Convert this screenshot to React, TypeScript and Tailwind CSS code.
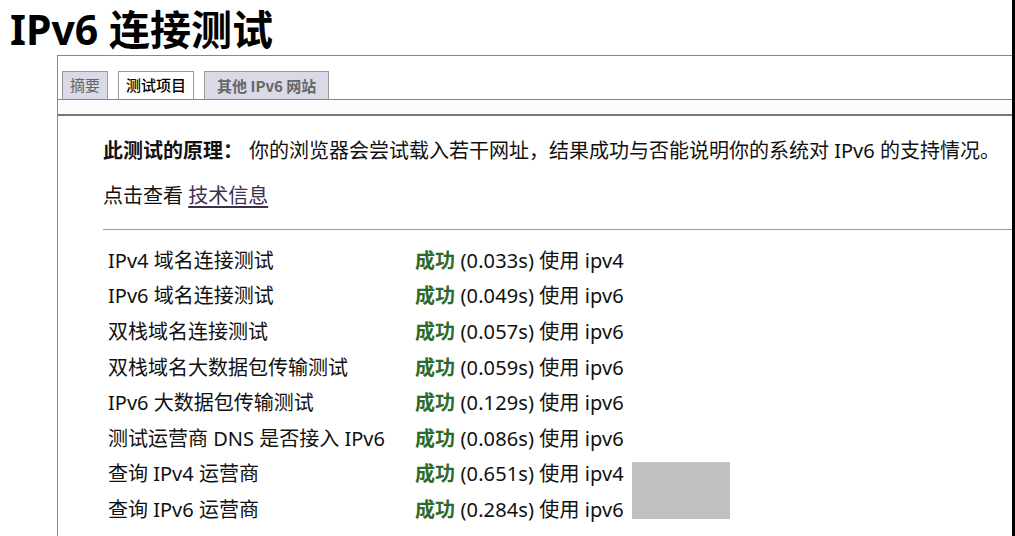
const rows = [
  { name: "IPv4 域名连接测试", time: "0.033s", via: "ipv4" },
  { name: "IPv6 域名连接测试", time: "0.049s", via: "ipv6" },
  { name: "双栈域名连接测试", time: "0.057s", via: "ipv6" },
  { name: "双栈域名大数据包传输测试", time: "0.059s", via: "ipv6" },
  { name: "IPv6 大数据包传输测试", time: "0.129s", via: "ipv6" },
  { name: "测试运营商 DNS 是否接入 IPv6", time: "0.086s", via: "ipv6" },
  { name: "查询 IPv4 运营商", time: "0.651s", via: "ipv4" },
  { name: "查询 IPv6 运营商", time: "0.284s", via: "ipv6" },
];

export default function App() {
  return (
    <div className="w-[1015px] h-[536px] overflow-hidden bg-white border-r-[3px] border-black text-[#111] font-['Noto_Sans','Noto_Sans_CJK_SC',sans-serif]">
      {/* Title */}
      <h1 className="pl-[10px] pt-[3px] h-[55px] text-[41px] leading-[52px] font-bold text-black">
        IPv6 连接测试
      </h1>

      <div className="ml-[57px] border-l border-t border-[#888] h-[481px]">
        {/* Tabs */}
        <div className="flex gap-[10px] pl-[4px] pt-[15px] border-b border-[#888]">
          <div className="h-[28px] px-[7px] border border-b-0 border-[#999] bg-[#d9d9e8] text-[#666] text-[15px] leading-[27px]">
            摘要
          </div>
          <div className="h-[28px] px-[7px] border border-b-0 border-[#999] bg-white text-black text-[15px] font-medium leading-[27px]">
            测试项目
          </div>
          <div className="h-[28px] px-[12px] border border-b-0 border-[#999] bg-[#d9d9e8] text-[#666] text-[15px] font-bold leading-[27px] font-['Noto_Sans_CJK_SC','DejaVu_Serif',serif]">
            其他 IPv6 网站
          </div>
        </div>
        <div className="h-[16px] bg-[#fcfcfc] border-b-2 border-[#777]" />

        {/* Content */}
        <div className="pl-[45px] text-[20px]">
          <p className="pt-[20px] leading-[30px]">
            <span className="font-bold mr-[6px]">此测试的原理：</span>
            你的浏览器会尝试载入若干网址，结果成功与否能说明你的系统对 IPv6 的支持情况。
          </p>
          <p className="mt-[15px] leading-[30px]">
            点击查看 <span className="underline underline-offset-[3px] text-[#3c3050]">技术信息</span>
          </p>
          <div className="mt-[18px] border-t border-[#999]" />

          <div className="mt-[13px] grid grid-cols-[307px_max-content_max-content] auto-rows-[35.6px] items-center leading-[30px]">
            {rows.map((r, i) => (
              <div key={r.name} className="contents">
                <div className="pl-[5px]">{r.name}</div>
                <div className="pl-[5px] tracking-[0.1px]">
                  <span className="font-bold text-[#2d6a2d]">成功</span> ({r.time}) 使用 {r.via}
                </div>
                {i === 6 && (
                  <div className="row-span-2 self-start pl-[8px] pt-[5px]">
                    <div className="w-[98px] h-[57px] bg-[#c0c0c0]" />
                  </div>
                )}
                {i < 6 && <div />}
              </div>
            ))}
          </div>
        </div>
      </div>
    </div>
  );
}
